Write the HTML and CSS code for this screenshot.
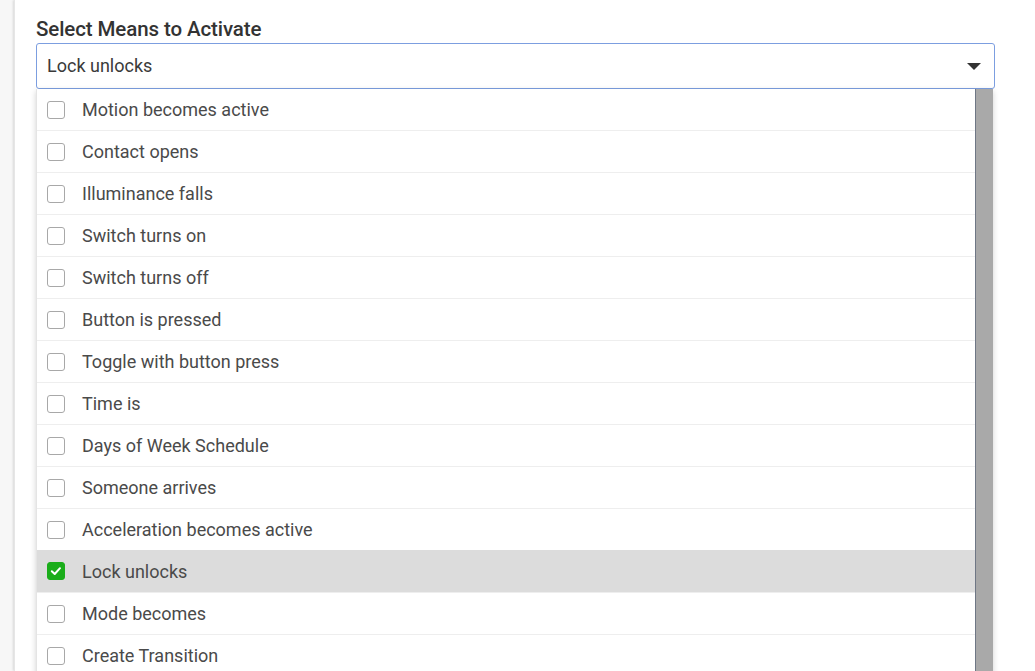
FILE: index.html
```html
<!DOCTYPE html>
<html>
<head>
<meta charset="utf-8">
<link rel="stylesheet" href="styles.css">
</head>
<body>
<div class="page">
  <div class="side"></div>
  <div class="panel">
    <div class="title">Select Means to Activate</div>
    <div class="select">
      <span class="value">Lock unlocks</span>
      <span class="arrow"></span>
    </div>
    <div class="dropdown">
      <ul class="list">
        <li class="row"><span class="box"></span><span class="label">Motion becomes active</span></li>
        <li class="row"><span class="box"></span><span class="label">Contact opens</span></li>
        <li class="row"><span class="box"></span><span class="label">Illuminance falls</span></li>
        <li class="row"><span class="box"></span><span class="label">Switch turns on</span></li>
        <li class="row"><span class="box"></span><span class="label">Switch turns off</span></li>
        <li class="row"><span class="box"></span><span class="label">Button is pressed</span></li>
        <li class="row"><span class="box"></span><span class="label">Toggle with button press</span></li>
        <li class="row"><span class="box"></span><span class="label">Time is</span></li>
        <li class="row"><span class="box"></span><span class="label">Days of Week Schedule</span></li>
        <li class="row"><span class="box"></span><span class="label">Someone arrives</span></li>
        <li class="row"><span class="box"></span><span class="label">Acceleration becomes active</span></li>
        <li class="row selected"><span class="box checked"><svg viewBox="0 0 18 18" width="18" height="18"><path d="M4.8 9.3 L7.7 12 L13 6.2" fill="none" stroke="#fff" stroke-width="2" stroke-linecap="round" stroke-linejoin="round"/></svg></span><span class="label">Lock unlocks</span></li>
        <li class="row"><span class="box"></span><span class="label">Mode becomes</span></li>
        <li class="row"><span class="box"></span><span class="label">Create Transition</span></li>
      </ul>
      <div class="scrollbar"></div>
    </div>
  </div>
</div>
</body>
</html>
```

FILE: styles.css
```css
html, body {
  margin: 0;
  padding: 0;
  height: 100%;
  overflow: hidden;
  background: #f7f7f7;
  font-family: Roboto, "Liberation Sans", sans-serif;
}
.page {
  display: flex;
  height: 671px;
}
.side {
  width: 14px;
  flex: none;
  background: #f7f7f7;
}
.panel {
  flex: 1;
  background: #fff;
  box-shadow: -1px 0 2px rgba(0,0,0,0.12);
  border-left: 1px solid #e6e6e6;
  padding: 15px 40px 0 21px;
  overflow: hidden;
}
.title {
  font-size: 20.5px;
  font-weight: 500;
  color: #333;
  line-height: 28px;
  height: 28px;
  letter-spacing: -0.1px;
}
.select {
  height: 44px;
  border: 1px solid #7c9ee0;
  border-radius: 3px;
  display: flex;
  align-items: center;
  justify-content: space-between;
  padding: 0 13px 1px 10px;
  box-sizing: border-box;
  height: 46px;
}
.value {
  font-size: 18px;
  color: #3a3a3a;
}
.arrow {
  width: 0;
  height: 0;
  border-left: 7px solid transparent;
  border-right: 7px solid transparent;
  border-top: 7px solid #333;
  margin-top: 2px;
}
.dropdown {
  display: flex;
  margin-right: 2px;
  box-shadow: 0 2px 6px rgba(0,0,0,0.18);
  background: #fff;
}
.list {
  list-style: none;
  margin: 0;
  padding: 0;
  flex: 1;
  border-left: 1px solid #e4e4e4;
}
.row {
  height: 41px;
  border-bottom: 1px solid #eeeeee;
  display: flex;
  align-items: center;
  padding-left: 10px;
}
.row.selected {
  background: #dcdcdc;
  height: 42px;
  margin-top: -1px;
}
.box {
  width: 16px;
  height: 16px;
  border: 1px solid #a8a8a8;
  border-radius: 3px;
  background: #fff;
  flex: none;
  position: relative;
}
.box.checked {
  background: #1aad1a;
  border-color: #1aad1a;
}
.box svg {
  position: absolute;
  left: -1px;
  top: -1px;
}
.label {
  margin-left: 17px;
  font-size: 18px;
  color: #4a4a4a;
}
.scrollbar {
  width: 17px;
  flex: none;
  background: #a9a9a9;
  border-left: 1px solid #6f7785;
}
```
